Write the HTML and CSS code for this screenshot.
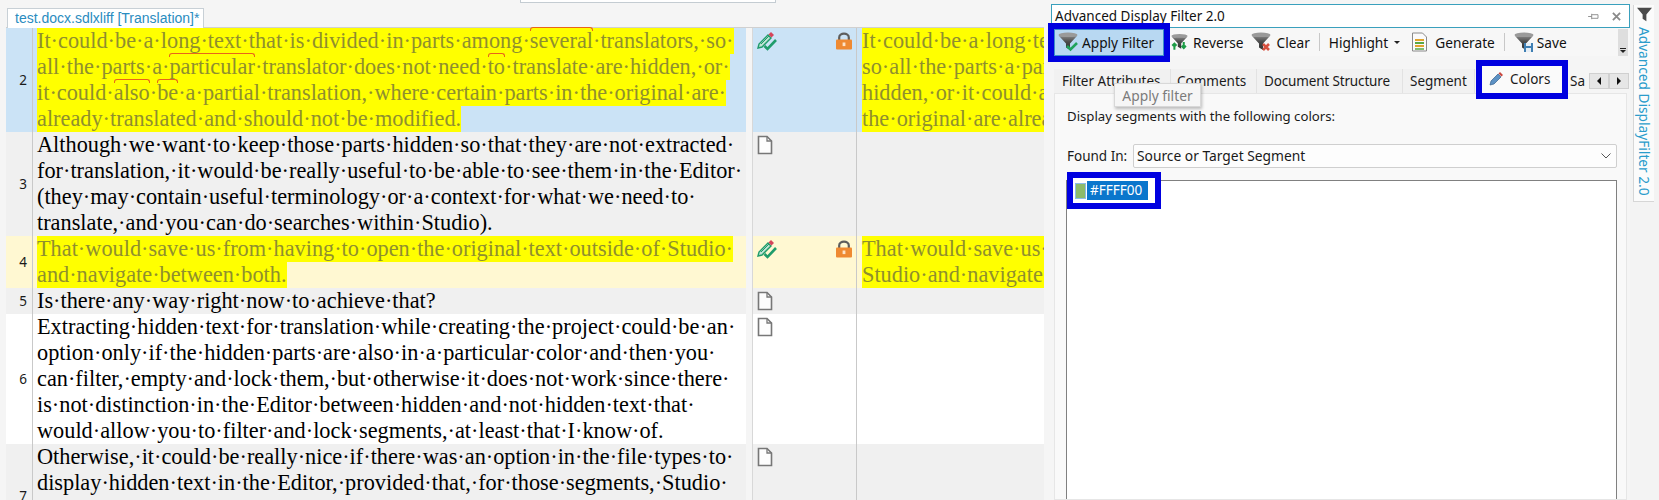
FILE: index.html
```html
<!DOCTYPE html>
<html lang="en">
<head>
<meta charset="utf-8">
<title>Advanced Display Filter</title>
<link rel="stylesheet" href="styles.css">
</head>
<body>
<svg class="defs" width="0" height="0" aria-hidden="true">
  <defs>
    <linearGradient id="fn" x1="0" y1="0" x2="0" y2="1"><stop offset="0" stop-color="#8a8a8a"/><stop offset=".45" stop-color="#4a4a4a"/><stop offset="1" stop-color="#333"/></linearGradient>
    <symbol id="funnel" viewBox="0 0 20 20"><ellipse cx="10" cy="3" rx="9.5" ry="2.5" fill="#9a9a9a"/><path d="M.6 3.4C3 5.6 17 5.6 19.4 3.4L12 11.5V18L8 15.5V11.5Z" fill="url(#fn)"/></symbol>
    <symbol id="doc" viewBox="0 0 16 20"><path d="M1.5 1.5H10L14.5 6V18.5H1.5Z" fill="#fdfdfd" stroke="#777" stroke-width="1.6"/><path d="M10 1.5V6H14.5" fill="none" stroke="#777" stroke-width="1.3"/></symbol>
    <symbol id="done" viewBox="0 0 20 20"><path d="M1 17L2 13 11 4 14 7 5 16Z" fill="#bfe3d4" stroke="#1f9c6b" stroke-width="1.4"/><path d="M4 13L12 5" stroke="#1f9c6b"/><path d="M11.5 3.5L14 1 17 4 14.500 6.500Z" fill="#d6455a"/><path d="M7.500 15L10.500 18 19 9" fill="none" stroke="#1f9c6b" stroke-width="2.6"/></symbol>
    <symbol id="lock" viewBox="0 0 16 18"><path d="M3.2 8V5.4C3.2 .4 12.8 .4 12.8 5.4V8" fill="none" stroke="#5d5d5d" stroke-width="2.2"/><rect x="0" y="7.5" width="16" height="10" rx="1" fill="#ef8a32"/><rect x="6.6" y="10.5" width="2.8" height="3.6" fill="#fde3c8"/></symbol>
  </defs>
</svg>

<div class="app">
  <section class="editor">
    <div class="topbar">
      <div class="searchbox"></div>
      <div class="doctab">test.docx.sdlxliff [Translation]*</div>
    </div>

    <div class="row row-active">
      <div class="num">2</div>
      <div class="src marked">
        <div class="ln">It·could·be·a·long·text·that·is·divided·in·parts·among·<span class="sq">several</span>·translators,·so·</div>
        <div class="ln">all·the·parts·a·<span class="sq">particular</span>·translator·does·not·need·<span class="sq">to</span>·translate·are·hidden,·or·</div>
        <div class="ln">it·could·<span class="sq">also</span>·<span class="sq">be</span>·a·partial·translation,·where·certain·parts·in·the·original·are·</div>
        <div class="ln">already·translated·and·should·not·be·modified.</div>
      </div>
      <div class="gutter"></div>
      <div class="status">
        <svg class="ic-done"><use href="#done"/></svg>
        <svg class="ic-lock"><use href="#lock"/></svg>
      </div>
      <div class="tgt marked">
        <div class="ln">It·could·be·a·long·text·that·is·divided·in·parts·among·several·translators,·</div>
        <div class="ln">so·all·the·parts·a·particular·translator·does·not·need·to·translate·are·</div>
        <div class="ln">hidden,·or·it·could·also·be·a·partial·translation,·where·certain·parts·in·</div>
        <div class="ln">the·original·are·already·translated·and·should·not·be·modified.</div>
      </div>
    </div>

    <div class="row row-grey">
      <div class="num">3</div>
      <div class="src">
        <div class="ln">Although·we·want·to·keep·those·parts·hidden·so·that·they·are·not·extracted·</div>
        <div class="ln">for·translation,·it·would·be·really·useful·to·be·able·to·see·them·in·the·Editor·</div>
        <div class="ln">(they·may·contain·useful·terminology·or·a·context·for·what·we·need·to·</div>
        <div class="ln">translate,·and·you·can·do·searches·within·Studio).</div>
      </div>
      <div class="gutter"></div>
      <div class="status"><svg class="ic-doc"><use href="#doc"/></svg></div>
      <div class="tgt"></div>
    </div>

    <div class="row row-cream">
      <div class="num">4</div>
      <div class="src marked">
        <div class="ln">That·would·save·us·from·having·to·open·the·original·text·outside·of·Studio·</div>
        <div class="ln">and·navigate·between·both.</div>
      </div>
      <div class="gutter"></div>
      <div class="status">
        <svg class="ic-done"><use href="#done"/></svg>
        <svg class="ic-lock"><use href="#lock"/></svg>
      </div>
      <div class="tgt marked">
        <div class="ln">That·would·save·us·from·having·to·open·the·original·text·outside·of·</div>
        <div class="ln">Studio·and·navigate·between·both.</div>
      </div>
    </div>

    <div class="row row-grey">
      <div class="num">5</div>
      <div class="src"><div class="ln">Is·there·any·way·right·now·to·achieve·that?</div></div>
      <div class="gutter"></div>
      <div class="status"><svg class="ic-doc"><use href="#doc"/></svg></div>
      <div class="tgt"></div>
    </div>

    <div class="row row-white">
      <div class="num">6</div>
      <div class="src">
        <div class="ln">Extracting·hidden·text·for·translation·while·creating·the·project·could·be·an·</div>
        <div class="ln">option·only·if·the·hidden·parts·are·also·in·a·particular·color·and·then·you·</div>
        <div class="ln">can·filter,·empty·and·lock·them,·but·otherwise·it·does·not·work·since·there·</div>
        <div class="ln">is·not·distinction·in·the·Editor·between·hidden·and·not·hidden·text·that·</div>
        <div class="ln">would·allow·you·to·filter·and·lock·segments,·at·least·that·I·know·of.</div>
      </div>
      <div class="gutter"></div>
      <div class="status"><svg class="ic-doc"><use href="#doc"/></svg></div>
      <div class="tgt"></div>
    </div>

    <div class="row row-grey row-tall">
      <div class="num">7</div>
      <div class="src">
        <div class="ln">Otherwise,·it·could·be·really·nice·if·there·was·an·option·in·the·file·types·to·</div>
        <div class="ln">display·hidden·text·in·the·Editor,·provided·that,·for·those·segments,·Studio·</div>
      </div>
      <div class="gutter"></div>
      <div class="status"><svg class="ic-doc"><use href="#doc"/></svg></div>
      <div class="tgt"></div>
    </div>
  </section>

  <section class="panel">
    <header class="titlebar">
      <span class="title">Advanced Display Filter 2.0</span>
      <svg class="pin" viewBox="0 0 12 10"><path d="M0 5H4M4 2V8M4 3H11M4 7H11M11 3V7" fill="none" stroke="#8a8a8a"/></svg>
      <svg class="close" viewBox="0 0 10 10"><path d="M1 1L9 9M9 1L1 9" stroke="#8a8a8a" stroke-width="2"/></svg>
    </header>

    <div class="toolbar">
      <button class="tool tool-apply annot">
        <svg class="tico" viewBox="0 0 20 20"><use href="#funnel"/><path d="M9 14L12.5 17.5 19 11" fill="none" stroke="#1fa35c" stroke-width="2.6"/></svg>
        <span>Apply Filter</span>
      </button>
      <button class="tool tool-rev">
        <svg class="tico-s" viewBox="0 0 20 20"><use href="#funnel"/><path d="M4 19V12M1.5 14.5L4 12 6.5 14.5M15 10V17M12.5 14.5L15 17 17.5 14.5" fill="none" stroke="#1c9c46" stroke-width="2.4"/></svg>
        <span>Reverse</span>
      </button>
      <button class="tool tool-clear">
        <svg class="tico" viewBox="0 0 20 20"><use href="#funnel"/><path d="M12 12L18 18M18 12L12 18" stroke="#d8503f" stroke-width="2.6"/></svg>
        <span>Clear</span>
      </button>
      <i class="tsep"></i>
      <button class="tool tool-high"><span>Highlight</span><b class="caret"></b></button>
      <button class="tool tool-gen">
        <svg class="tico-s" viewBox="0 0 16 20"><path d="M1 1H11L15 5V19H1Z" fill="#fafafa" stroke="#8a8a8a"/><path d="M3.500 8H12.500" stroke="#e2a32b" stroke-width="2"/><path d="M3.500 11H12.500" stroke="#5aa845" stroke-width="2"/><path d="M3.500 14H12.500" stroke="#e2a32b" stroke-width="2"/><path d="M3.500 17H12.500" stroke="#5aa845" stroke-width="1.500"/></svg>
        <span>Generate</span>
      </button>
      <i class="tsep"></i>
      <button class="tool tool-save">
        <svg class="tico" viewBox="0 0 20 20"><use href="#funnel"/><path d="M10 11H19V20H10Z" fill="#3f7fb3"/><path d="M12 11H17V14H12ZM12 16H17V20H12Z" fill="#e6eef5"/></svg>
        <span>Save</span>
      </button>
      <div class="overflow"><i class="ovbar"></i><b class="caret"></b></div>
    </div>

    <nav class="tabs">
      <span class="tab t-attr">Filter Attributes</span>
      <span class="tab t-com">Comments</span>
      <span class="tab t-doc">Document Structure</span>
      <span class="tab t-seg">Segment</span>
      <span class="tab-active annot">
        <svg class="pen" viewBox="0 0 14 14"><path d="M1 13L2 9 9 2 12 5 5 12Z" fill="#5d92c4" stroke="#35628f" stroke-width=".7"/><path d="M9.500 1.500L11 0 14 3 12.500 4.500Z" fill="#c8463f"/></svg>
        Colors
      </span>
      <span class="t-sa">Sa</span>
      <span class="scroller"><i class="arr arr-l"></i></span>
      <span class="scroller"><i class="arr arr-r"></i></span>
    </nav>

    <div class="pane">
      <p class="hint">Display segments with the following colors:</p>
      <div class="found">
        <label class="found-l">Found In:</label>
        <div class="select">Source or Target Segment
          <svg class="chev" viewBox="0 0 10 6"><path d="M.5 .5L5 5 9.500 .5" fill="none" stroke="#555"/></svg>
        </div>
      </div>
      <div class="listbox">
        <div class="item annot"><i class="swatch"></i><span class="sel">#FFFF00</span></div>
      </div>
    </div>

    <div class="tooltip">Apply filter</div>
  </section>

  <aside class="strip">
    <div class="vtab">
      <svg class="vfunnel" viewBox="0 0 20 20"><path d="M0 1H20L12.500 10V19L7.500 15.500V10Z" fill="#4a4a4a"/></svg>
      <span class="vtext">Advanced DisplayFilter 2.0</span>
    </div>
  </aside>
</div>
</body>
</html>
```

FILE: styles.css
```css
* { box-sizing: border-box; }
html, body { margin: 0; padding: 0; height: 500px; overflow: hidden; }
.defs { position: absolute; }
.app {
  display: flex; width: 1659px; height: 500px; overflow: hidden;
  background: #f5f5f5; font-family: "Noto Sans", "Open Sans", sans-serif; color: #1a1a1a;
}

/* editor */
.editor { width: 1044px; margin-right: 7px; padding-left: 6px; flex: none; }
.topbar { height: 28px; display: flex; flex-direction: column; border-bottom: 1px solid #d0d0d0; position: relative; }
.searchbox { position: absolute; left: 514px; top: 0; width: 256px; height: 3px; background: #fff; border: 1px solid #c4ccd2; border-top: 0; }
.doctab {
  margin: 8px 0 0 1px; width: 197px; height: 20px; background: #fff; border: 1px solid #c8d0d6; border-bottom: 0;
  font: 14px/19px "Liberation Sans", sans-serif; color: #2a8cc0; padding-left: 7px; white-space: nowrap;
}
.row { display: grid; grid-template-columns: 27px 713px 6px 105px 187px; }
.row-active { background: #cbe3f6; }
.row-grey { background: #f0f0f0; }
.row-cream { background: #fff8d2; }
.row-white { background: #fff; }
.row-tall { min-height: 104px; }
.num {
  border-right: 1px solid #c9c9c9; display: flex; align-items: center; justify-content: flex-end;
  padding-right: 5px; font-size: 13.500px;
}
.src, .tgt { font: 22.3px/26px "Liberation Serif", serif; color: #000; white-space: nowrap; }
.src { padding-left: 4px; }
.tgt { padding-left: 5px; overflow: hidden; }
.ln { width: fit-content; height: 26px; }
.marked .ln { background: #ffff00; color: #8f8f2e; }
.gutter { background: #f5f5f5; }
.status { border-right: 1px solid #c9c9c9; border-left: 1px solid #d8d8d8; display: flex; justify-content: space-between; align-items: flex-start; padding: 3px 4px 0 4px; min-height: 26px; }
.ic-done { width: 20px; height: 20px; }
.ic-lock { width: 16px; height: 18px; margin-top: 1px; }
.ic-doc { width: 16px; height: 20px; }
.sq { position: relative; }
.sq::before {
  content: ""; position: absolute; left: 0; right: 0; top: -1px; height: 3px;
  border: 1px solid #e9641a; border-width: 1.500px 1px 0; border-radius: 3px 3px 0 0;
}

/* panel */
.panel { width: 579px; flex: none; margin-top: 4px; position: relative; display: flex; flex-direction: column; }
.titlebar {
  height: 24px; background: #fff; border: 1px solid #3aa0bd; display: flex; align-items: center;
  padding: 0 8px 0 3px; font-size: 13.500px; color: #111;
}
.title { flex: 1; }
.pin { width: 11px; height: 9px; margin-right: 13px; }
.close { width: 9px; height: 9px; }
.toolbar { height: 28px; display: flex; align-items: center; padding-left: 3px; background: #f7f7f7; font-size: 13.700px; }
.tool {
  display: flex; align-items: center; height: 27px; border: 0; background: none; padding: 0; margin: 0;
  font: inherit; color: #111; white-space: nowrap;
}
.tool-apply { width: 110px; background: #b8d8f2; border: 1px solid #3d8fc9; padding-left: 3px; gap: 4px; }
.tool-rev { margin-left: 7px; gap: 5px; }
.tool-clear { margin-left: 7px; gap: 6px; }
.tool-high { gap: 6px; }
.tool-gen { margin-left: 11px; gap: 7px; }
.tool-save { gap: 3px; }
.tico { width: 20px; height: 20px; overflow: visible; }
.tico-s { width: 17px; height: 20px; overflow: visible; }
.tsep { width: 1px; height: 18px; background: #c8c8c8; margin: 0 9px; }
.caret { width: 0; height: 0; border: 3px solid transparent; border-top: 3px solid #222; border-bottom: 0; display: block; }
.overflow {
  margin-left: auto; margin-right: 2px; width: 10px; height: 27px; background: #dedede;
  display: flex; flex-direction: column; justify-content: flex-end; align-items: center; padding-bottom: 3px; gap: 1px;
}
.ovbar { width: 6px; height: 1px; background: #222; }
.tabs { height: 37px; padding: 13px 0 0 3px; display: flex; align-items: center; font-size: 13.500px; position: relative; }
.tab { height: 24px; line-height: 25px; padding: 0 8px; border-right: 1px solid #e2e2e2; background: #f1f1f1; white-space: nowrap; }
.t-attr { padding-left: 8px; width: 117px; }
.t-com { width: 86px; padding-left: 6px; }
.t-doc { width: 146px; padding-left: 7px; letter-spacing: -.15px; }
.t-seg { width: 72px; padding-left: 7px; }
.tab-active {
  width: 80px; height: 27px; margin: -4px 0 0 7px; background: #fafafa; display: flex; align-items: center; gap: 7px; padding-left: 7px;
  white-space: nowrap;
}
.t-sa { margin-left: 8px; width: 19px; overflow: hidden; }
.scroller { width: 20px; height: 16px; background: #e6e6e6; border: 1px solid #d0d0d0; display: flex; align-items: center; justify-content: center; }
.arr { width: 0; height: 0; border: 4px solid transparent; }
.arr-l { border-right-color: #111; border-left: 0; }
.arr-r { border-left-color: #111; border-right: 0; }
.pen { width: 14px; height: 14px; }
.annot { outline: 6px solid #0000e0; position: relative; z-index: 2; }
.pane { margin-left: 3px; margin-right: 3px; flex: 1; background: #f9f9f9; border: 1px solid #e6e6e6; padding: 12px 9px 0 12px; font-size: 13.500px; display: flex; flex-direction: column; }
.hint { margin: 0; height: 20px; line-height: 20px; font-size: 13.200px; }
.found { margin-top: 18px; display: flex; align-items: center; height: 24px; gap: 5px; }
.found-l { white-space: nowrap; width: 61px; }
.select { flex: 1; height: 24px; line-height: 22px; border: 1px solid #cfcfcf; background: #fdfdfd; padding-left: 3px; position: relative; border-radius: 2px; font-size: 13.800px; }
.chev { position: absolute; right: 5px; top: 8px; width: 10px; height: 6px; }
.listbox { margin: 12px 0 0 -1px; flex: 1; background: #fff; border: 1px solid #808080; border-bottom: 0; }
.item { margin: -3px 0 0 6px; width: 82px; height: 25px; background: #fff; display: flex; align-items: center; padding-left: 2px; gap: 1px; }
.swatch { width: 11px; height: 16px; background: #8dbb6b; border: 1px solid #8cbde6; }
.sel { background: #0a76cc; color: #fff; height: 19px; line-height: 19px; padding: 0 3px; width: 61px; }
.tooltip {
  position: absolute; left: 63px; top: 79px; width: 87px; height: 24px; line-height: 23px; text-align: center;
  background: #f6f6f6; border: 1px solid #d8d8d8; color: #7b7b7b; font-size: 13.800px; box-shadow: 1px 2px 3px rgba(0,0,0,.25); z-index: 3;
}

/* right strip */
.strip { flex: 1; padding: 5px 5px 0 3px; background: #f3f3f3; }
.vtab { width: 21px; height: 197px; background: #fbfbfb; border-left: 1px solid #d6d6d6; border-bottom: 1px solid #d6d6d6; display: flex; flex-direction: column; align-items: center; padding-top: 2px; gap: 5px; }
.vfunnel { width: 15px; height: 15px; flex: none; }
.vtext { writing-mode: vertical-rl; font-size: 13.700px; color: #2a9ccb; white-space: nowrap; line-height: 16px; }
```
